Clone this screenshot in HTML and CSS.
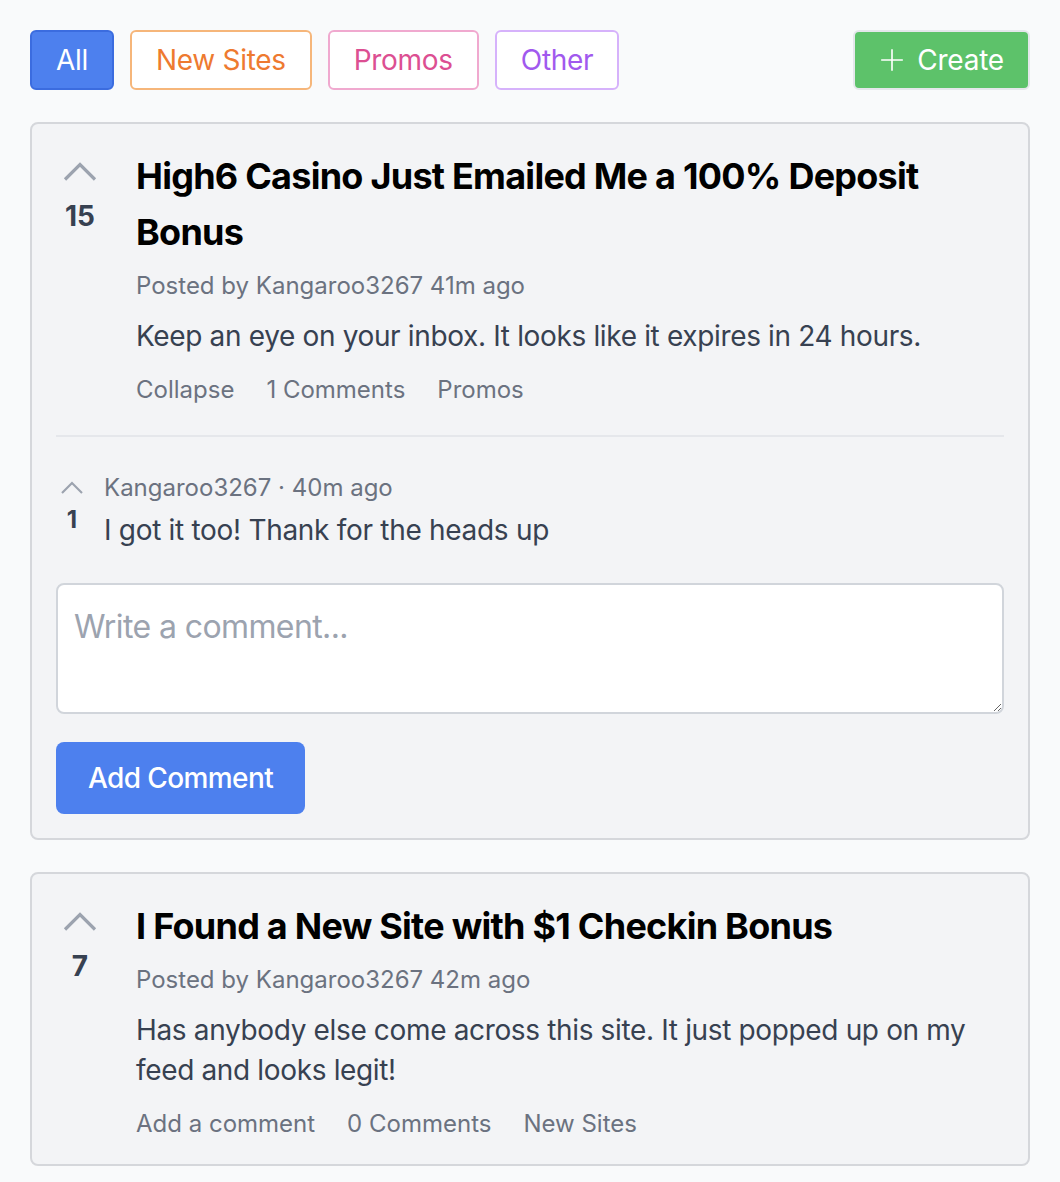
FILE: index.html
```html
<!DOCTYPE html>
<html lang="en">
<head>
<meta charset="utf-8">
<title>Feed</title>
<link rel="stylesheet" href="styles.css">
</head>
<body>
<div class="page">
  <div class="toolbar">
    <div class="filters">
      <button class="chip chip-all">All</button>
      <button class="chip chip-new">New Sites</button>
      <button class="chip chip-promo">Promos</button>
      <button class="chip chip-other">Other</button>
    </div>
    <button class="create">
      <svg class="plus" viewBox="0 0 24 24" width="26" height="26" fill="none" stroke="currentColor" stroke-width="1.5"><path d="M12 2v20M2 12h20"/></svg>
      <span>Create</span>
    </button>
  </div>

  <div class="card">
    <div class="post">
      <div class="vote">
        <svg class="chev" viewBox="0 0 24 24" width="48" height="48" fill="none" stroke="currentColor" stroke-width="1.6"><path d="M4.5 15.75l7.5-7.5 7.5 7.5"/></svg>
        <div class="count">15</div>
      </div>
      <div class="post-body">
        <h2 class="title">High6 Casino Just Emailed Me a 100% Deposit Bonus</h2>
        <div class="meta">Posted by Kangaroo3267 41m ago</div>
        <p class="text">Keep an eye on your inbox. It looks like it expires in 24 hours.</p>
        <div class="actions"><span>Collapse</span><span>1 Comments</span><span>Promos</span></div>
      </div>
    </div>
    <div class="comments">
      <div class="comment">
        <div class="cvote">
          <svg class="chev" viewBox="0 0 24 24" width="32" height="32" fill="none" stroke="currentColor" stroke-width="1.6"><path d="M4.5 15.75l7.5-7.5 7.5 7.5"/></svg>
          <div class="ccount">1</div>
        </div>
        <div class="cbody">
          <div class="cmeta">Kangaroo3267 · 40m ago</div>
          <div class="ctext">I got it too! Thank for the heads up</div>
        </div>
      </div>
      <textarea class="input" placeholder="Write a comment..."></textarea>
      <button class="add">Add Comment</button>
    </div>
  </div>

  <div class="card">
    <div class="post">
      <div class="vote">
        <svg class="chev" viewBox="0 0 24 24" width="48" height="48" fill="none" stroke="currentColor" stroke-width="1.6"><path d="M4.5 15.75l7.5-7.5 7.5 7.5"/></svg>
        <div class="count">7</div>
      </div>
      <div class="post-body">
        <h2 class="title">I Found a New Site with $1 Checkin Bonus</h2>
        <div class="meta">Posted by Kangaroo3267 42m ago</div>
        <p class="text">Has anybody else come across this site. It just popped up on my feed and looks legit!</p>
        <div class="actions"><span>Add a comment</span><span>0 Comments</span><span>New Sites</span></div>
      </div>
    </div>
  </div>
</div>
</body>
</html>
```

FILE: styles.css
```css
* { box-sizing: border-box; }
html, body { margin: 0; padding: 0; }
body {
  background: #f9fafb;
  font-family: Inter, "Noto Sans", "Liberation Sans", sans-serif;
  color: #374151;
}
.page { padding: 30px; }

.toolbar {
  display: flex;
  justify-content: space-between;
  align-items: flex-start;
  margin-bottom: 32px;
}
.filters { display: flex; gap: 16px; }
.chip {
  font-family: inherit;
  font-size: 28px;
  line-height: 40px;
  letter-spacing: -0.3px;
  height: 60px;
  padding: 8px 24px;
  border-radius: 6px;
  border: 2px solid;
  background: #fff;
  cursor: pointer;
}
.chip-all { background: #4d80ee; border-color: #3b6cdf; color: #fff; }
.chip-new { border-color: #f6b67a; color: #ee7a30; }
.chip-promo { border-color: #f0a9cf; color: #dc4f92; }
.chip-other { border-color: #d6b2fb; color: #a159ee; }

.create {
  display: flex;
  align-items: center;
  gap: 12px;
  height: 60px;
  padding: 0 24px 0 24px;
  font-family: inherit;
  font-size: 28px;
  letter-spacing: -0.2px;
  color: #fff;
  background: #5dc26a;
  border: 2px solid #e5e7eb;
  border-radius: 6px;
}
.plus { display: block; }

.card {
  background: #f3f4f6;
  border: 2px solid #d5d7db;
  border-radius: 8px;
  padding: 24px;
  margin-bottom: 32px;
}

.post { display: flex; }
.vote {
  width: 48px;
  flex: none;
  margin-right: 32px;
  display: flex;
  flex-direction: column;
  align-items: center;
}
.chev { display: block; color: #9ca3af; }
.count {
  font-size: 28px;
  line-height: 40px;
  font-weight: 700;
  color: #374151;
}
.post-body { flex: 1; min-width: 0; }
.title {
  margin: 0;
  font-size: 36px;
  line-height: 56px;
  font-weight: 700;
  color: #000;
  letter-spacing: -0.75px;
}
.meta {
  margin-top: 10px;
  font-size: 24px;
  line-height: 32px;
  color: #6b7280;
}
.text {
  margin: 14px 0 0;
  font-size: 28px;
  line-height: 40px;
  letter-spacing: -0.35px;
  color: #374151;
}
.actions {
  margin-top: 18px;
  display: flex;
  gap: 32px;
  font-size: 24px;
  line-height: 32px;
  color: #6b7280;
}

.comments {
  margin-top: 29px;
  border-top: 2px solid #e5e7eb;
  padding-top: 35px;
}
.comment { display: flex; }
.cvote {
  width: 32px;
  flex: none;
  margin-right: 16px;
  display: flex;
  flex-direction: column;
  align-items: center;
}
.ccount {
  font-size: 24px;
  line-height: 32px;
  font-weight: 700;
  color: #374151;
}
.cbody { flex: 1; }
.cmeta {
  font-size: 24px;
  line-height: 32px;
  color: #6b7280;
}
.ctext {
  margin-top: 6px;
  font-size: 28px;
  line-height: 40px;
  letter-spacing: -0.3px;
  color: #374151;
}
.input {
  display: block;
  width: 100%;
  height: 131px;
  margin-top: 33px;
  padding: 18px 16px 16px;
  font-family: inherit;
  font-size: 32px;
  line-height: 48px;
  letter-spacing: -0.6px;
  background: #fff;
  border: 2px solid #d1d5db;
  border-radius: 8px;
  color: #111827;
}
.input::placeholder { color: #9ca3af; }
.add {
  display: block;
  margin-top: 28px;
  height: 72px;
  padding: 0 32px;
  font-family: inherit;
  font-size: 28px;
  font-weight: 500;
  letter-spacing: -0.6px;
  color: #fff;
  background: #4d80ee;
  border: none;
  border-radius: 8px;
}
```
